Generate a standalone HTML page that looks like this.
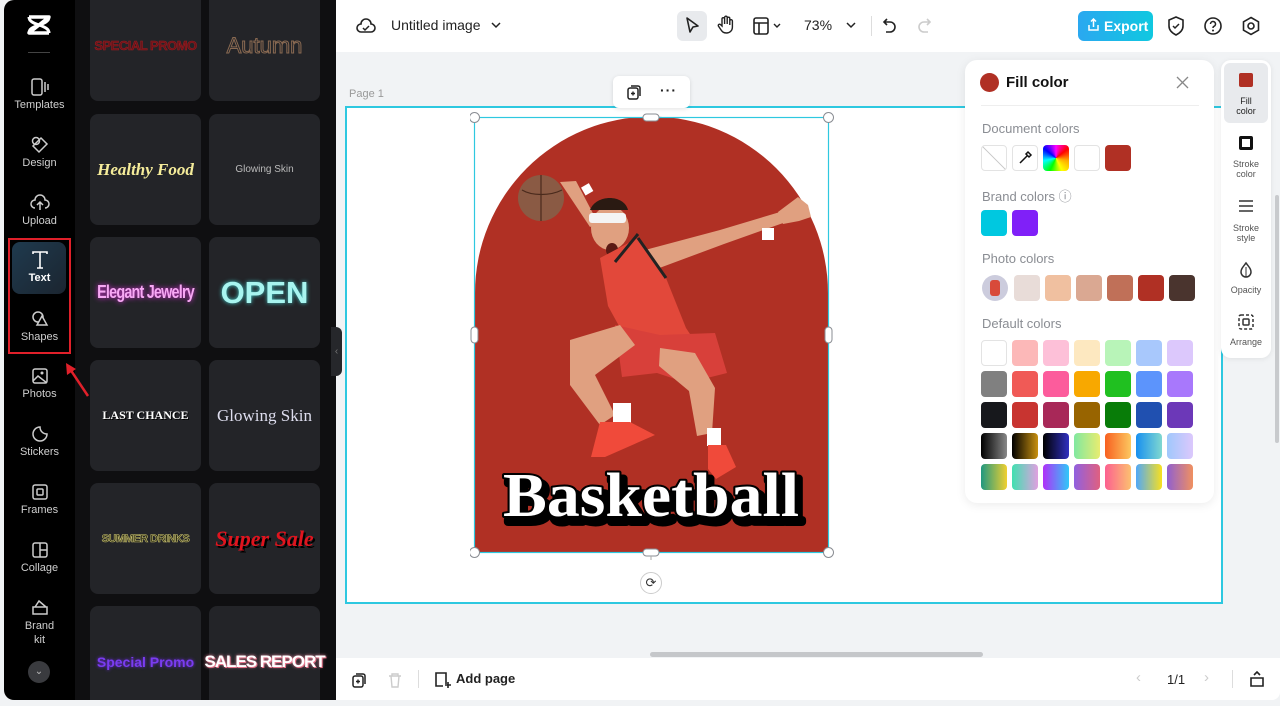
<!DOCTYPE html>
<html><head><meta charset="utf-8">
<style>
*{box-sizing:border-box;margin:0;padding:0}
html,body{width:1280px;height:706px;overflow:hidden}
body{background:#f1f3f5;font-family:"Liberation Sans",sans-serif;position:relative}
.abs{position:absolute}
#side{left:4px;top:0;width:71px;height:700px;background:#000;border-radius:10px 0 0 10px}
.nav{position:absolute;left:0;width:71px;text-align:center;color:#cfcfcf;font-size:11px}
.nav svg{display:block;margin:0 auto 3px}
#panel{left:75px;top:0;width:261px;height:700px;background:#0f0f11;overflow:hidden}
.card{position:absolute;width:111px;height:111px;background:#232428;border-radius:8px;display:flex;align-items:center;justify-content:center;text-align:center;white-space:nowrap}
#top{left:336px;top:0;width:944px;height:52px;background:#fff}
#bot{left:336px;top:658px;width:944px;height:42px;background:#fff;border-radius:0 0 8px 0}
.ic{position:absolute}
.sw{position:absolute;width:26px;height:26px;border-radius:4px}
.lbl{position:absolute;left:982px;font-size:13px;color:#8a8d93}
.rt{position:absolute;left:1222px;width:48px;text-align:center;font-size:9px;color:#555;line-height:10px}
</style></head><body>

<!-- left sidebar -->
<div id="side" class="abs">
  <svg class="abs" style="left:22px;top:14px" width="26" height="22" viewBox="0 0 26 22"><path d="M3 3h20L3 19h20" fill="none" stroke="#fff" stroke-width="3.4" stroke-linejoin="round"/><path d="M3 3c0 4 4 6 10 8 6 2 10 4 10 8M23 3c0 4-4 6-10 8-6 2-10 4-10 8" fill="none" stroke="#fff" stroke-width="3"/></svg>
  <div class="abs" style="left:24px;top:52px;width:22px;height:1px;background:#444"></div>
  <div class="nav" style="top:78px"><svg width="20" height="18" viewBox="0 0 20 18"><rect x="2" y="1" width="10" height="16" rx="2" fill="none" stroke="#ccc" stroke-width="1.5"/><path d="M15 4v10M18 6v6" stroke="#ccc" stroke-width="1.5"/></svg>Templates</div>
  <div class="nav" style="top:136px"><svg width="20" height="18" viewBox="0 0 20 18"><circle cx="6" cy="5" r="3.5" fill="none" stroke="#ccc" stroke-width="1.5"/><path d="M11 2l6 6-8 8-6-6z" fill="none" stroke="#ccc" stroke-width="1.5"/></svg>Design</div>
  <div class="nav" style="top:194px"><svg width="20" height="18" viewBox="0 0 20 18"><path d="M5 14a4 4 0 0 1 0-8 5 5 0 0 1 10 0 4 4 0 0 1 0 8M10 8v8M7 11l3-3 3 3" fill="none" stroke="#ccc" stroke-width="1.5"/></svg>Upload</div>
  <div class="abs" style="left:8px;top:242px;width:54px;height:52px;border-radius:8px;background:linear-gradient(135deg,#1f3a4e,#1b2530)"></div>
  <div class="nav" style="top:251px;color:#fff;font-weight:bold"><svg width="20" height="18" viewBox="0 0 20 18"><path d="M3 3V1h14v2M10 1v16M7 17h6" fill="none" stroke="#fff" stroke-width="1.6"/></svg>Text</div>
  <div class="nav" style="top:310px"><svg width="20" height="18" viewBox="0 0 20 18"><circle cx="8" cy="7" r="5" fill="none" stroke="#ccc" stroke-width="1.5"/><path d="M12 6l5 9H7z" fill="#000" stroke="#ccc" stroke-width="1.5"/></svg>Shapes</div>
  <div class="abs" style="left:4px;top:238px;width:63px;height:116px;border:2px solid #e0202a"></div>
  <div class="nav" style="top:367px"><svg width="20" height="18" viewBox="0 0 20 18"><rect x="3" y="2" width="14" height="14" rx="2" fill="none" stroke="#ccc" stroke-width="1.5"/><path d="M3 14l5-5 9 7" fill="none" stroke="#ccc" stroke-width="1.5"/><circle cx="12" cy="6" r="1.5" fill="#ccc"/></svg>Photos</div>
  <div class="nav" style="top:425px"><svg width="20" height="18" viewBox="0 0 20 18"><path d="M10 2a7 7 0 1 0 7 7c-4 0-7-3-7-7z" fill="none" stroke="#ccc" stroke-width="1.5"/></svg>Stickers</div>
  <div class="nav" style="top:483px"><svg width="20" height="18" viewBox="0 0 20 18"><rect x="3" y="2" width="14" height="14" rx="2" fill="none" stroke="#ccc" stroke-width="1.5"/><rect x="7" y="6" width="6" height="6" rx="1" fill="none" stroke="#ccc" stroke-width="1.5"/></svg>Frames</div>
  <div class="nav" style="top:541px"><svg width="20" height="18" viewBox="0 0 20 18"><rect x="3" y="2" width="14" height="14" rx="2" fill="none" stroke="#ccc" stroke-width="1.5"/><path d="M10 2v14M10 9h7" stroke="#ccc" stroke-width="1.5"/></svg>Collage</div>
  <div class="nav" style="top:598px;line-height:14px"><svg width="20" height="18" viewBox="0 0 20 18"><path d="M3 9h14v7H3zM5 9l4-6 7 6" fill="none" stroke="#ccc" stroke-width="1.5"/></svg>Brand<br>kit</div>
  <div class="abs" style="left:24px;top:661px;width:22px;height:22px;border-radius:50%;background:#3a3b3f;color:#bbb;font-size:10px;text-align:center;line-height:22px">⌄</div>
</div>

<!-- template panel -->
<div id="panel" class="abs">
  <div class="card" style="left:15px;top:-10px;color:#6b1418;font-weight:bold;font-size:13px;letter-spacing:-0.5px;-webkit-text-stroke:.5px #a01c22">SPECIAL PROMO</div>
  <div class="card" style="left:134px;top:-10px;color:transparent;-webkit-text-stroke:1px #8a6a52;font-size:22px">Autumn</div>
  <div class="card" style="left:15px;top:114px;color:#f5ec9a;font-family:'Liberation Serif';font-style:italic;font-weight:bold;font-size:17px">Healthy Food</div>
  <div class="card" style="left:134px;top:114px;color:#bbb;font-size:10px">Glowing Skin</div>
  <div class="card" style="left:15px;top:237px"><span style="display:inline-block;color:#f7a8f4;font-weight:bold;font-size:18px;letter-spacing:-1px;text-shadow:0 0 6px #e030e0;transform:scaleX(.8)">Elegant Jewelry</span></div>
  <div class="card" style="left:134px;top:237px;color:#a8f5f0;font-weight:bold;font-size:31px;text-shadow:0 0 4px #4cc">OPEN</div>
  <div class="card" style="left:15px;top:360px;color:#fff;font-family:'Liberation Serif';font-weight:bold;font-size:12px;text-shadow:1px 1px 0 #000">LAST CHANCE</div>
  <div class="card" style="left:134px;top:360px;color:#dde;font-family:'Liberation Serif';font-size:17px">Glowing Skin</div>
  <div class="card" style="left:15px;top:483px;color:#2a2a10;font-weight:bold;font-size:11px;letter-spacing:-.5px;-webkit-text-stroke:.6px #c8c070">SUMMER DRINKS</div>
  <div class="card" style="left:134px;top:483px;color:#e0141e;font-family:'Liberation Serif';font-style:italic;font-weight:bold;font-size:22px;text-shadow:2px 2px 0 #000">Super Sale</div>
  <div class="card" style="left:15px;top:606px;color:#7a3cf0;font-weight:bold;font-size:14px;text-shadow:0 0 3px #6a2ce0">Special Promo</div>
  <div class="card" style="left:134px;top:606px;color:#fff;font-weight:bold;font-size:17px;letter-spacing:-1px;text-shadow:0 0 3px #f08aa0,1px 1px 0 #e06a80">SALES REPORT</div>
</div>
<svg class="abs" style="left:60px;top:358px;z-index:5" width="34" height="44"><path d="M28 38L8 8" stroke="#e0202a" stroke-width="2.5" fill="none"/><path d="M6 5l1 12 9-6z" fill="#e0202a"/></svg>
<div class="abs" style="left:331px;top:327px;width:11px;height:49px;background:#26272b;border-radius:0 6px 6px 0;color:#777;font-size:10px;line-height:49px;text-align:center">‹</div>

<!-- top bar -->
<div id="top" class="abs">
  <svg class="ic" style="left:20px;top:17px" width="20" height="18" viewBox="0 0 20 18"><path d="M5 15a4 4 0 0 1 0-8 5 5 0 0 1 10 0 4 4 0 0 1 0 8z" fill="none" stroke="#222" stroke-width="1.6"/><path d="M7 11l2 2 4-4" fill="none" stroke="#222" stroke-width="1.5"/></svg>
  <div class="abs" style="left:55px;top:17px;font-size:14px;color:#222">Untitled image</div>
  <svg class="ic" style="left:155px;top:21px" width="10" height="8"><path d="M1 2l4 4 4-4" fill="none" stroke="#222" stroke-width="1.5"/></svg>
  <div class="abs" style="left:341px;top:11px;width:30px;height:30px;background:#e8eaed;border-radius:6px"></div>
  <svg class="ic" style="left:348px;top:16px" width="16" height="20" viewBox="0 0 16 20"><path d="M3 2l11 8-5 1-3 5z" fill="none" stroke="#222" stroke-width="1.6" stroke-linejoin="round"/></svg>
  <svg class="ic" style="left:381px;top:15px" width="18" height="20" viewBox="0 0 18 20"><path d="M5 11V4a1.3 1.3 0 0 1 2.6 0v5V2.5a1.3 1.3 0 0 1 2.6 0V9V3.5a1.3 1.3 0 0 1 2.6 0V10V6a1.3 1.3 0 0 1 2.6 0v6c0 4-3 6-6 6s-4-1-6-4l-2-3a1.3 1.3 0 0 1 2-1.5z" fill="none" stroke="#222" stroke-width="1.4"/></svg>
  <svg class="ic" style="left:417px;top:17px" width="30" height="18" viewBox="0 0 30 18"><rect x="1" y="1" width="14" height="16" rx="2" fill="none" stroke="#222" stroke-width="1.6"/><path d="M1 6h14M6 6v11" stroke="#222" stroke-width="1.6"/><path d="M21 7l3 3 3-3" fill="none" stroke="#222" stroke-width="1.4"/></svg>
  <div class="abs" style="left:468px;top:17px;font-size:14px;color:#222">73%</div>
  <svg class="ic" style="left:510px;top:22px" width="10" height="8"><path d="M1 1l4 4 4-4" fill="none" stroke="#222" stroke-width="1.5"/></svg>
  <div class="abs" style="left:535px;top:16px;width:1px;height:20px;background:#ddd"></div>
  <svg class="ic" style="left:546px;top:17px" width="16" height="18" viewBox="0 0 16 18"><path d="M5 2L2 5l3 3M2 5h6a5 5 0 0 1 0 10H4" fill="none" stroke="#222" stroke-width="1.6"/></svg>
  <svg class="ic" style="left:580px;top:17px" width="16" height="18" viewBox="0 0 16 18"><path d="M11 2l3 3-3 3M14 5H8a5 5 0 0 0 0 10h4" fill="none" stroke="#ccc" stroke-width="1.6"/></svg>
  <div class="abs" style="left:742px;top:11px;width:75px;height:30px;border-radius:6px;background:linear-gradient(90deg,#2aa8f0,#10c8e0);color:#fff;font-size:14px;font-weight:bold;line-height:30px;padding-left:26px">Export</div>
  <svg class="ic" style="left:751px;top:18px" width="13" height="14" viewBox="0 0 13 14"><path d="M2 7v5h9V7M6.5 9V1M4 3.5L6.5 1 9 3.5" fill="none" stroke="#fff" stroke-width="1.5"/></svg>
  <svg class="ic" style="left:831px;top:16px" width="18" height="20" viewBox="0 0 18 20"><path d="M9 1l7 3v6c0 4-3 7-7 9-4-2-7-5-7-9V4z" fill="none" stroke="#222" stroke-width="1.6"/><path d="M6 10l2 2 4-4" fill="none" stroke="#222" stroke-width="1.5"/></svg>
  <svg class="ic" style="left:867px;top:16px" width="20" height="20" viewBox="0 0 20 20"><circle cx="10" cy="10" r="8" fill="none" stroke="#222" stroke-width="1.6"/><path d="M7.5 8a2.5 2.5 0 1 1 3.5 2.3c-.7.3-1 .8-1 1.7" fill="none" stroke="#222" stroke-width="1.5"/><circle cx="10" cy="14.5" r="1" fill="#222"/></svg>
  <svg class="ic" style="left:905px;top:16px" width="20" height="20" viewBox="0 0 20 20"><path d="M10 1.5l7.5 4.3v8.4L10 18.5l-7.5-4.3V5.8z" fill="none" stroke="#222" stroke-width="1.6"/><circle cx="10" cy="10" r="3" fill="none" stroke="#222" stroke-width="1.6"/></svg>
</div>

<!-- canvas -->
<div class="abs" style="left:349px;top:88px;font-size:11px;color:#999">Page 1</div>
<div class="abs" style="left:345px;top:106px;width:878px;height:498px;background:#fff;border:2px solid #2ec8e0"></div>
<div class="abs" style="left:613px;top:76px;width:77px;height:32px;background:#fff;border-radius:6px;box-shadow:0 1px 4px rgba(0,0,0,.12)"></div>
<svg class="ic" style="left:626px;top:84px" width="16" height="16" viewBox="0 0 16 16"><rect x="2" y="4" width="10" height="11" rx="2" fill="none" stroke="#222" stroke-width="1.5"/><path d="M5 2h7a2 2 0 0 1 2 2v8" fill="none" stroke="#222" stroke-width="1.5"/><path d="M7 7.5v4M5 9.5h4" stroke="#222" stroke-width="1.4"/></svg>
<div class="abs" style="left:660px;top:82px;font-size:14px;color:#222;font-weight:bold;letter-spacing:1px">···</div>

<svg class="abs" style="left:470px;top:110px" width="365" height="450" viewBox="470 110 365 450">
  <path d="M475 553V293a176.5 176.5 0 0 1 353 0v260z" fill="#b03024"/>
  <g>
    <circle cx="541" cy="198" r="23" fill="#8a5a44"/>
    <path d="M522 190c10 6 28 6 40 0M541 175v46" stroke="#4a2a1c" stroke-width="1.2" fill="none"/>
    <path d="M560 182l30 45 8-4-22-42z" fill="#e0a080"/>
    <rect x="583" y="185" width="9" height="9" fill="#fff" transform="rotate(-30 587 190)"/>
    <path d="M645 250l75-20 60-18 6 10-62 22-70 26z" fill="#e0a080"/>
    <path d="M778 212l20-15 10 8 3 12-12 4-16 3z" fill="#e0a080"/>
    <rect x="762" y="228" width="12" height="12" fill="#fff"/>
    <ellipse cx="610" cy="228" rx="19" ry="22" fill="#e0a080"/>
    <path d="M590 210c6-16 34-16 38 0z" fill="#2a1a12"/>
    <rect x="589" y="213" width="37" height="10" rx="3" fill="#f4f4f4"/>
    <ellipse cx="612" cy="250" rx="6" ry="7" fill="#5a1a14"/>
    <path d="M600 258l38-20 28 40 20 50 24 36-40 12-40-30-22-40z" fill="#e2483a"/>
    <path d="M615 262l23-28M638 238l28 40" stroke="#222" stroke-width="3" fill="none"/>
    <path d="M615 325l45 10 55-2 12 40-40 10-30-10-35 4z" fill="#d8403a"/>
    <path d="M570 340l50-15 15 20-40 30 20 40-15 10-30-40z" fill="#e0a080"/>
    <path d="M660 348l35 5 20 35-3 45-15 3-8-45-30-25z" fill="#e0a080"/>
    <rect x="613" y="403" width="18" height="20" fill="#fff"/>
    <rect x="707" y="428" width="14" height="18" fill="#fff"/>
    <path d="M600 422l30 0 25 13-50 22-14 0z" fill="#f04a3a"/>
    <path d="M708 445l18 0 10 22-20 12-8-10z" fill="#f04a3a"/>
  </g>
  <text x="655" y="522" text-anchor="middle" font-family="Liberation Serif,serif" font-weight="bold" font-size="62" textLength="296" lengthAdjust="spacingAndGlyphs" fill="#000" stroke="#000" stroke-width="8" stroke-linejoin="round">Basketball</text>
  <text x="651" y="516" text-anchor="middle" font-family="Liberation Serif,serif" font-weight="bold" font-size="62" textLength="296" lengthAdjust="spacingAndGlyphs" fill="#fff" stroke="#000" stroke-width="4" paint-order="stroke" stroke-linejoin="round">Basketball</text>
  <rect x="474.5" y="117.5" width="354" height="435" fill="none" stroke="#2ec8e0" stroke-width="1.2"/>
  <g fill="#fff" stroke="#8a8d93" stroke-width="1">
    <circle cx="474.5" cy="117.5" r="5"/><circle cx="828.5" cy="117.5" r="5"/><circle cx="474.5" cy="552.5" r="5"/><circle cx="828.5" cy="552.5" r="5"/>
    <rect x="643" y="114" width="16" height="7" rx="3.5"/><rect x="643" y="549" width="16" height="7" rx="3.5"/>
    <rect x="471" y="327" width="7" height="16" rx="3.5"/><rect x="825" y="327" width="7" height="16" rx="3.5"/>
  </g>
  <path d="M651 556v16" stroke="#aaa"/>
</svg>
<div class="abs" style="left:640px;top:572px;width:22px;height:22px;border-radius:50%;background:#fff;border:1px solid #ccc;text-align:center;line-height:20px;font-size:13px;color:#333">⟳</div>

<!-- fill color popover -->
<div class="abs" style="left:965px;top:60px;width:249px;height:443px;background:#fff;border-radius:12px;box-shadow:0 2px 10px rgba(0,0,0,.08)"></div>
<div class="abs" style="left:980px;top:73px;width:19px;height:19px;border-radius:50%;background:#b03024"></div>
<div class="abs" style="left:1006px;top:74px;font-size:15px;font-weight:bold;color:#111">Fill color</div>
<svg class="ic" style="left:1176px;top:76px" width="13" height="13"><path d="M1 1l11 11M12 1L1 12" stroke="#888" stroke-width="1.3"/></svg>
<div class="abs" style="left:981px;top:105px;width:218px;height:1px;background:#eee"></div>
<div class="lbl" style="top:121px">Document colors</div>
<div class="sw" style="left:981px;top:145px;border:1px solid #e3e3e3;background:linear-gradient(45deg,transparent 48%,#ccc 49%,#ccc 51%,transparent 52%)"></div>
<div class="sw" style="left:1012px;top:145px;border:1px solid #e3e3e3"></div>
<svg class="ic" style="left:1017px;top:150px" width="16" height="16" viewBox="0 0 16 16"><path d="M3 13l7-7M9 4l3 3M11 2l3 3-2 2-3-3z" stroke="#111" stroke-width="1.5" fill="none"/></svg>
<div class="sw" style="left:1043px;top:145px;background:conic-gradient(#f0f,#f00,#fa0,#ff0,#0f0,#0ff,#00f,#f0f)"></div>
<div class="sw" style="left:1074px;top:145px;border:1px solid #e3e3e3;background:#fff"></div>
<div class="sw" style="left:1105px;top:145px;background:#b03024"></div>
<div class="lbl" style="top:186px">Brand colors ⓘ</div>
<div class="sw" style="left:981px;top:210px;background:#00c8e0"></div>
<div class="sw" style="left:1012px;top:210px;background:#8020f8"></div>
<div class="lbl" style="top:251px">Photo colors</div>
<div class="sw" style="left:982px;top:275px;border-radius:50%;background:#ccd"></div>
<div class="abs" style="left:990px;top:280px;width:10px;height:16px;background:#d84a3a;border-radius:3px"></div>
<div class="sw" style="left:1014px;top:275px;background:#e8dcd8"></div>
<div class="sw" style="left:1045px;top:275px;background:#f0c0a0"></div>
<div class="sw" style="left:1076px;top:275px;background:#daa892"></div>
<div class="sw" style="left:1107px;top:275px;background:#c07058"></div>
<div class="sw" style="left:1138px;top:275px;background:#b03024"></div>
<div class="sw" style="left:1169px;top:275px;background:#4a342e"></div>
<div class="lbl" style="top:316px">Default colors</div>
<div class="sw" style="left:981px;top:340px;background:#fff;border:1px solid #e3e3e3"></div>
<div class="sw" style="left:1012px;top:340px;background:#fcb8b8"></div>
<div class="sw" style="left:1043px;top:340px;background:#fdc0d8"></div>
<div class="sw" style="left:1074px;top:340px;background:#fde8c0"></div>
<div class="sw" style="left:1105px;top:340px;background:#b8f4b8"></div>
<div class="sw" style="left:1136px;top:340px;background:#a8c8fc"></div>
<div class="sw" style="left:1167px;top:340px;background:#dcc8fc"></div>
<div class="sw" style="left:981px;top:371px;background:#808080"></div>
<div class="sw" style="left:1012px;top:371px;background:#f05a56"></div>
<div class="sw" style="left:1043px;top:371px;background:#fc5c9c"></div>
<div class="sw" style="left:1074px;top:371px;background:#f8a800"></div>
<div class="sw" style="left:1105px;top:371px;background:#20c020"></div>
<div class="sw" style="left:1136px;top:371px;background:#5c94fc"></div>
<div class="sw" style="left:1167px;top:371px;background:#a878fc"></div>
<div class="sw" style="left:981px;top:402px;background:#17181c"></div>
<div class="sw" style="left:1012px;top:402px;background:#c83430"></div>
<div class="sw" style="left:1043px;top:402px;background:#a82858"></div>
<div class="sw" style="left:1074px;top:402px;background:#986400"></div>
<div class="sw" style="left:1105px;top:402px;background:#087c08"></div>
<div class="sw" style="left:1136px;top:402px;background:#2050b0"></div>
<div class="sw" style="left:1167px;top:402px;background:#6c38b8"></div>
<div class="sw" style="left:981px;top:433px;background:linear-gradient(90deg,#000,#888)"></div>
<div class="sw" style="left:1012px;top:433px;background:linear-gradient(90deg,#000,#c89010)"></div>
<div class="sw" style="left:1043px;top:433px;background:linear-gradient(90deg,#000,#3030c0)"></div>
<div class="sw" style="left:1074px;top:433px;background:linear-gradient(90deg,#80e8a0,#e8ec70)"></div>
<div class="sw" style="left:1105px;top:433px;background:linear-gradient(90deg,#f86020,#fcc860)"></div>
<div class="sw" style="left:1136px;top:433px;background:linear-gradient(90deg,#1890f0,#80d8d0)"></div>
<div class="sw" style="left:1167px;top:433px;background:linear-gradient(90deg,#a0c8fc,#dcc8fc)"></div>
<div class="sw" style="left:981px;top:464px;background:linear-gradient(90deg,#209880,#f0d030)"></div>
<div class="sw" style="left:1012px;top:464px;background:linear-gradient(90deg,#40e0b0,#e0a0e0)"></div>
<div class="sw" style="left:1043px;top:464px;background:linear-gradient(90deg,#b030f8,#30c8f8)"></div>
<div class="sw" style="left:1074px;top:464px;background:linear-gradient(90deg,#9060e0,#e06080)"></div>
<div class="sw" style="left:1105px;top:464px;background:linear-gradient(90deg,#fc6090,#fcc070)"></div>
<div class="sw" style="left:1136px;top:464px;background:linear-gradient(90deg,#50a8f8,#f8e020)"></div>
<div class="sw" style="left:1167px;top:464px;background:linear-gradient(90deg,#9060d0,#f09060)"></div>

<!-- right toolbar -->
<div class="abs" style="left:1221px;top:60px;width:50px;height:298px;background:#fff;border-radius:10px;box-shadow:0 1px 6px rgba(0,0,0,.08)"></div>
<div class="abs" style="left:1224px;top:63px;width:44px;height:60px;background:#e8eaed;border-radius:6px"></div>
<div class="abs" style="left:1239px;top:73px;width:14px;height:14px;background:#b03024;border-radius:2px"></div>
<div class="rt" style="top:96px;color:#222">Fill<br>color</div>
<div class="abs" style="left:1239px;top:136px;width:14px;height:14px;border:3px solid #111;border-radius:2px"></div>
<div class="rt" style="top:159px">Stroke<br>color</div>
<svg class="ic" style="left:1238px;top:199px" width="16" height="14"><path d="M1 2h14M1 7h14M1 12h14" stroke="#333" stroke-width="1.6"/></svg>
<div class="rt" style="top:223px">Stroke<br>style</div>
<svg class="ic" style="left:1238px;top:261px" width="16" height="18" viewBox="0 0 16 18"><path d="M8 2c3 4 5 6 5 9a5 5 0 0 1-10 0c0-3 2-5 5-9z" fill="none" stroke="#333" stroke-width="1.5"/><path d="M8 6v10" stroke="#333"/></svg>
<div class="rt" style="top:285px">Opacity</div>
<svg class="ic" style="left:1238px;top:314px" width="16" height="16"><rect x="1" y="1" width="14" height="14" rx="2" fill="none" stroke="#333" stroke-width="1.5" stroke-dasharray="3 2"/><rect x="5" y="5" width="6" height="6" rx="1" fill="none" stroke="#333" stroke-width="1.5"/></svg>
<div class="rt" style="top:337px">Arrange</div>
<div class="abs" style="left:1275px;top:195px;width:4px;height:248px;background:#c8cacd;border-radius:2px"></div>

<!-- bottom -->
<div class="abs" style="left:650px;top:652px;width:333px;height:5px;background:#c5c7ca;border-radius:3px"></div>
<div id="bot" class="abs">
  <svg class="ic" style="left:15px;top:14px" width="16" height="16" viewBox="0 0 16 16"><rect x="2" y="4" width="10" height="11" rx="2" fill="none" stroke="#222" stroke-width="1.5"/><path d="M5 2h7a2 2 0 0 1 2 2v8" fill="none" stroke="#222" stroke-width="1.5"/><path d="M7 7.5v4M5 9.5h4" stroke="#222" stroke-width="1.4"/></svg>
  <svg class="ic" style="left:52px;top:14px" width="14" height="16"><path d="M1 4h12M4 4V2h6v2M3 4l1 11h6l1-11" fill="none" stroke="#ccc" stroke-width="1.4"/></svg>
  <div class="abs" style="left:82px;top:12px;width:1px;height:18px;background:#ddd"></div>
  <svg class="ic" style="left:98px;top:13px" width="18" height="18"><path d="M12 13V2H2v13h7" fill="none" stroke="#222" stroke-width="1.6"/><path d="M14 11v6M11 14h6" stroke="#222" stroke-width="1.6"/></svg>
  <div class="abs" style="left:120px;top:13px;font-size:13px;font-weight:bold;color:#222">Add page</div>
  <div class="abs" style="left:800px;top:11px;font-size:15px;color:#ccc">‹</div>
  <div class="abs" style="left:831px;top:14px;font-size:13px;color:#222">1/1</div>
  <div class="abs" style="left:868px;top:11px;font-size:15px;color:#ccc">›</div>
  <div class="abs" style="left:896px;top:12px;width:1px;height:18px;background:#ddd"></div>
  <svg class="ic" style="left:913px;top:12px" width="16" height="18"><path d="M2 8h12v8H2zM5 5l3-3 3 3" fill="none" stroke="#222" stroke-width="1.6"/></svg>
</div>
</body></html>
